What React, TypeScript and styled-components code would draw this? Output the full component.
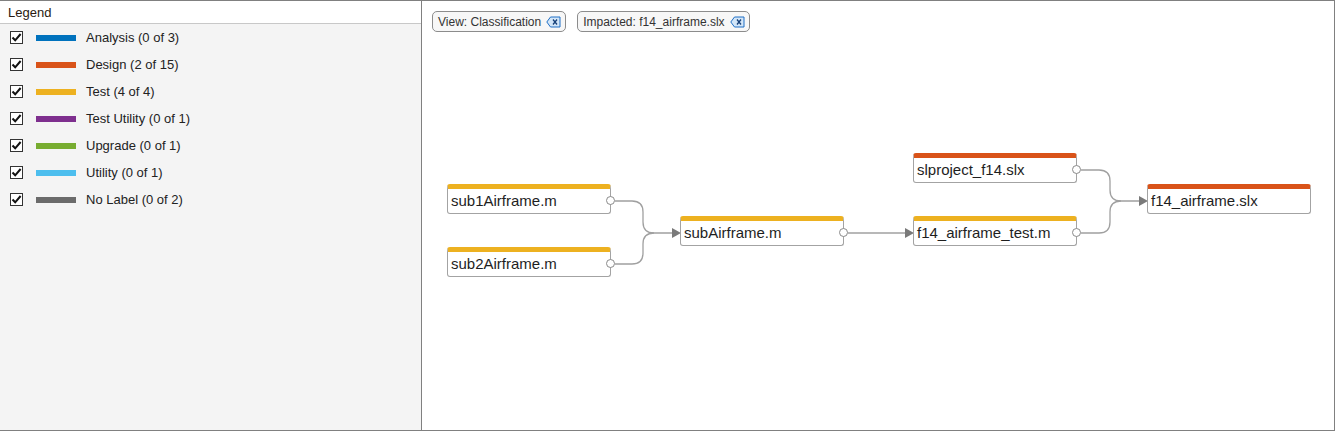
import React from 'react';
import styled, {createGlobalStyle} from 'styled-components';

const GlobalStyle = createGlobalStyle`
	html, body {
		margin: 0;
		padding: 0;
		background: #ffffff;
	}
	body {
		font-family: "Liberation Sans", Arial, sans-serif;
	}
`;

const Frame = styled.div`
	display: flex;
	width: 1335px;
	height: 431px;
	box-sizing: border-box;
	border-top: 1px solid #808080;
	border-right: 1px solid #808080;
	border-bottom: 1px solid #808080;
	overflow: hidden;
`;

const LegendPanel = styled.div`
	display: flex;
	flex-direction: column;
	width: 422px;
	flex-shrink: 0;
	box-sizing: border-box;
	border-right: 1px solid #808080;
	background: #f4f4f4;
`;

const LegendTitle = styled.div`
	height: 22px;
	line-height: 23px;
	padding-left: 8px;
	font-size: 13px;
	color: #2a1a10;
	background: #ffffff;
	border-bottom: 1px solid #c8c8c8;
`;

const LegendList = styled.div`
	display: flex;
	flex-direction: column;
`;

const LegendRow = styled.div`
	display: flex;
	align-items: center;
	height: 27px;
	padding-left: 10px;
`;

const CheckBox = styled.span`
	display: flex;
	align-items: center;
	justify-content: center;
	width: 13px;
	height: 13px;
	box-sizing: border-box;
	border: 1px solid #333333;
	background: #ffffff;
`;

const Swatch = styled.span<{$color: string}>`
	width: 40px;
	height: 6px;
	margin-left: 13px;
	background: ${p => p.$color};
`;

const LegendLabel = styled.span`
	margin-left: 10px;
	font-size: 13px;
	color: #222222;
`;

const Canvas = styled.div`
	position: relative;
	flex: 1;
	background: #ffffff;
`;

const ChipBar = styled.div`
	display: flex;
	gap: 11px;
	padding: 10px 0 0 10px;
`;

const Chip = styled.div`
	display: flex;
	align-items: center;
	gap: 5px;
	height: 21px;
	box-sizing: border-box;
	padding: 0 4px 0 5px;
	border: 1px solid #8c8c8c;
	border-radius: 5px;
	background: #f7f7f7;
	font-size: 12px;
	color: #333333;
`;

const EdgeLayer = styled.svg`
	position: absolute;
	left: 0;
	top: 0;
	width: 100%;
	height: 100%;
	pointer-events: none;
`;

const Node = styled.div<{$bar: string}>`
	position: absolute;
	width: 164px;
	height: 30px;
	box-sizing: border-box;
	border: 1px solid #a3a3a3;
	border-top: 5px solid ${p => p.$bar};
	border-radius: 3px;
	background: #ffffff;
	padding-left: 3px;
	font-size: 15px;
	line-height: 23px;
	color: #1e1e1e;
	white-space: nowrap;
`;

const Port = styled.span`
	position: absolute;
	right: -5px;
	top: 7px;
	width: 9px;
	height: 9px;
	box-sizing: border-box;
	border: 1px solid #8a8a8a;
	border-radius: 50%;
	background: #ffffff;
`;

const YELLOW = '#edb120';
const ORANGE = '#d95319';

const legend = [
	{label: 'Analysis (0 of 3)', color: '#0072bd'},
	{label: 'Design (2 of 15)', color: ORANGE},
	{label: 'Test (4 of 4)', color: YELLOW},
	{label: 'Test Utility (0 of 1)', color: '#7e2f8e'},
	{label: 'Upgrade (0 of 1)', color: '#77ac30'},
	{label: 'Utility (0 of 1)', color: '#4dbeee'},
	{label: 'No Label (0 of 2)', color: '#6b6b6b'},
];

// page coordinates, canvas starts at (422, 1)
const OX = 422;
const OY = 1;

const nodes = [
	{name: 'sub1Airframe.m', x: 447, y: 184, bar: YELLOW, port: true},
	{name: 'sub2Airframe.m', x: 447, y: 247, bar: YELLOW, port: true},
	{name: 'subAirframe.m', x: 680, y: 216, bar: YELLOW, port: true},
	{name: 'f14_airframe_test.m', x: 913, y: 216, bar: YELLOW, port: true},
	{name: 'slproject_f14.slx', x: 913, y: 153, bar: ORANGE, port: true},
	{name: 'f14_airframe.slx', x: 1147, y: 184, bar: ORANGE, port: false},
];

const edges = [
	'M615 201 H632 Q643 201 643 212 V222 Q643 233 654 233 H673',
	'M615 264 H632 Q643 264 643 253 V244 Q643 233 654 233',
	'M848 233 H906',
	'M1081 170 H1099 Q1110 170 1110 181 V190 Q1110 201 1121 201 H1140',
	'M1081 233 H1099 Q1110 233 1110 222 V212 Q1110 201 1121 201',
];

const arrows = [
	{x: 681, y: 233},
	{x: 914, y: 233},
	{x: 1148, y: 201},
];

const Check = () => (
	<svg width="11" height="11" viewBox="0 0 11 11">
		<path d="M1.5 5.5 L4.2 8.3 L9.6 2" fill="none" stroke="#111" strokeWidth="2"/>
	</svg>
);

const ClearIcon = () => (
	<svg width="15" height="12" viewBox="0 0 15 12">
		<path d="M4.5 1 H14 V11 H4.5 L0.8 6 Z" fill="#d3e6f8" stroke="#1f6fc5" strokeWidth="1"/>
		<path d="M7 3.5 L11 8.5 M11 3.5 L7 8.5" stroke="#163f78" strokeWidth="1.3"/>
	</svg>
);

export default function App() {
	return (
		<>
			<GlobalStyle/>
			<Frame>
				<LegendPanel>
					<LegendTitle>Legend</LegendTitle>
					<LegendList>
						{legend.map(item => (
							<LegendRow key={item.label}>
								<CheckBox><Check/></CheckBox>
								<Swatch $color={item.color}/>
								<LegendLabel>{item.label}</LegendLabel>
							</LegendRow>
						))}
					</LegendList>
				</LegendPanel>

				<Canvas>
					<ChipBar>
						<Chip>View: Classification <ClearIcon/></Chip>
						<Chip>Impacted: f14_airframe.slx <ClearIcon/></Chip>
					</ChipBar>

					<EdgeLayer>
						<g transform={`translate(${-OX} ${-OY})`}>
							{edges.map(d => (
								<path key={d} d={d} fill="none" stroke="#a0a0a0" strokeWidth="1.3"/>
							))}
							{arrows.map(a => (
								<polygon
									key={a.x}
									points={`${a.x - 9},${a.y - 5} ${a.x},${a.y} ${a.x - 9},${a.y + 5}`}
									fill="#7a7a7a"
								/>
							))}
						</g>
					</EdgeLayer>

					{nodes.map(n => (
						<Node key={n.name} $bar={n.bar} style={{left: n.x - OX, top: n.y - OY}}>
							{n.name}
							{n.port && <Port/>}
						</Node>
					))}
				</Canvas>
			</Frame>
		</>
	);
}
